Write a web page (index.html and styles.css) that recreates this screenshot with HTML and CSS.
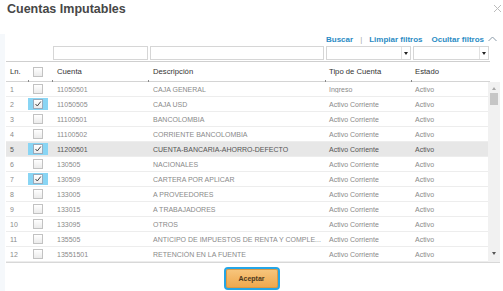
FILE: index.html
```html
<!DOCTYPE html>
<html lang="es">
<head>
  <meta charset="UTF-8">
  <title>Cuentas Imputables</title>
  <link rel="stylesheet" href="styles.css">
</head>
<body>
  <div class="dialogo">
    <div class="titulo">
      <h2>Cuentas Imputables</h2>
      <svg class="cerrar" width="9" height="9" viewBox="0 0 9 9"><path d="M1 1 L8 8 M8 1 L1 8" stroke="#bcbcbc" stroke-width="1" fill="none"/></svg>
    </div>

    <div class="contenido">
      <div class="enlaces">
        <a>Buscar</a>
        <span class="sep">|</span>
        <a>Limpiar filtros</a>
        <a class="ocultar">Ocultar filtros</a>
        <svg class="caret" width="9" height="6" viewBox="0 0 9 6"><path d="M0.5 5 L4.5 1 L8.5 5" stroke="#8a9aa8" stroke-width="1" fill="none"/></svg>
      </div>

      <div class="filtros">
        <div class="campo w-cta"></div>
        <div class="campo w-desc"></div>
        <div class="campo sel w-tipo"><span class="flecha"></span></div>
        <div class="campo sel w-est"><span class="flecha"></span></div>
      </div>

      <div class="cabecera">
        <div class="c">Ln.</div>
        <div class="c chk tick"><span class="cb"></span></div>
        <div class="c cta tick">Cuenta</div>
        <div class="c desc tick">Descripción</div>
        <div class="c tick">Tipo de Cuenta</div>
        <div class="c tick">Estado</div>
      </div>

      <div class="cuerpo">
        <div class="filas">
          <div class="fila"><div class="c">1</div><div class="c chk"><span class="marca"><span class="cb"></span></span></div><div class="c cta">11050501</div><div class="c desc">CAJA GENERAL</div><div class="c">Ingreso</div><div class="c">Activo</div></div>
          <div class="fila"><div class="c">2</div><div class="c chk"><span class="marca on"><span class="cb"><svg width="8" height="8" viewBox="0 0 8 8"><path d="M1.5 4 L3.3 6 L6.8 1.5" stroke="#444" stroke-width="1" fill="none"/></svg></span></span></div><div class="c cta">11050505</div><div class="c desc">CAJA USD</div><div class="c">Activo Corriente</div><div class="c">Activo</div></div>
          <div class="fila"><div class="c">3</div><div class="c chk"><span class="marca"><span class="cb"></span></span></div><div class="c cta">11100501</div><div class="c desc">BANCOLOMBIA</div><div class="c">Activo Corriente</div><div class="c">Activo</div></div>
          <div class="fila"><div class="c">4</div><div class="c chk"><span class="marca"><span class="cb"></span></span></div><div class="c cta">11100502</div><div class="c desc">CORRIENTE BANCOLOMBIA</div><div class="c">Activo Corriente</div><div class="c">Activo</div></div>
          <div class="fila activa"><div class="c">5</div><div class="c chk"><span class="marca on"><span class="cb"><svg width="8" height="8" viewBox="0 0 8 8"><path d="M1.5 4 L3.3 6 L6.8 1.5" stroke="#444" stroke-width="1" fill="none"/></svg></span></span></div><div class="c cta">11200501</div><div class="c desc">CUENTA-BANCARIA-AHORRO-DEFECTO</div><div class="c">Activo Corriente</div><div class="c">Activo</div></div>
          <div class="fila"><div class="c">6</div><div class="c chk"><span class="marca"><span class="cb"></span></span></div><div class="c cta">130505</div><div class="c desc">NACIONALES</div><div class="c">Activo Corriente</div><div class="c">Activo</div></div>
          <div class="fila"><div class="c">7</div><div class="c chk"><span class="marca on"><span class="cb"><svg width="8" height="8" viewBox="0 0 8 8"><path d="M1.5 4 L3.3 6 L6.8 1.5" stroke="#444" stroke-width="1" fill="none"/></svg></span></span></div><div class="c cta">130509</div><div class="c desc">CARTERA POR APLICAR</div><div class="c">Activo Corriente</div><div class="c">Activo</div></div>
          <div class="fila"><div class="c">8</div><div class="c chk"><span class="marca"><span class="cb"></span></span></div><div class="c cta">133005</div><div class="c desc">A PROVEEDORES</div><div class="c">Activo Corriente</div><div class="c">Activo</div></div>
          <div class="fila"><div class="c">9</div><div class="c chk"><span class="marca"><span class="cb"></span></span></div><div class="c cta">133015</div><div class="c desc">A TRABAJADORES</div><div class="c">Activo Corriente</div><div class="c">Activo</div></div>
          <div class="fila"><div class="c">10</div><div class="c chk"><span class="marca"><span class="cb"></span></span></div><div class="c cta">133095</div><div class="c desc">OTROS</div><div class="c">Activo Corriente</div><div class="c">Activo</div></div>
          <div class="fila"><div class="c">11</div><div class="c chk"><span class="marca"><span class="cb"></span></span></div><div class="c cta">135505</div><div class="c desc">ANTICIPO DE IMPUESTOS DE RENTA Y COMPLE...</div><div class="c">Activo Corriente</div><div class="c">Activo</div></div>
          <div class="fila"><div class="c">12</div><div class="c chk"><span class="marca"><span class="cb"></span></span></div><div class="c cta">13551501</div><div class="c desc">RETENCIÓN EN LA FUENTE</div><div class="c">Activo Corriente</div><div class="c">Activo</div></div>
        </div>
        <div class="scroll">
          <span class="arr arriba"></span>
          <span class="pulgar"></span>
          <span class="arr abajo"></span>
        </div>
      </div>

      <div class="pie">
        <button class="aceptar">Aceptar</button>
      </div>
    </div>
  </div>
</body>
</html>
```

FILE: styles.css
```css
body {
  margin: 0;
  background: white;
  font-family: 'Liberation Sans', Arial, sans-serif;
}
.dialogo {
  width: 503px;
  height: 291px;
  overflow: hidden;
}
.titulo {
  height: 18px;
  display: flex;
  justify-content: space-between;
  align-items: flex-start;
}
.titulo h2 {
  margin: 0;
  padding: 1px 0 0 7px;
  font-size: 12.5px;
  line-height: 16px;
  color: #474747;
}
.cerrar {
  margin: 4px 1px 0 0;
}
.contenido {
  border-left: 5px solid #f5f8fb;
  padding-left: 1px;
  height: 273px;
}
.enlaces {
  margin-top: 16px;
  height: 10px;
  display: flex;
  justify-content: flex-end;
  align-items: center;
  padding-right: 6px;
  font-size: 8px;
  font-weight: bold;
}
.enlaces a {
  color: #2b8bc4;
}
.enlaces .sep {
  color: #aaa;
  font-weight: normal;
  margin: 0 7px;
}
.enlaces .ocultar {
  margin-left: 9px;
}
.caret {
  margin-left: 4px;
}
.filtros {
  margin-top: 2px;
  height: 14px;
  display: flex;
  padding-left: 47px;
}
.campo {
  height: 12px;
  border: 1px solid #d6d6d6;
  background: white;
  margin-left: 2px;
  position: relative;
}
.w-cta { width: 93px; margin-left: 0; }
.w-desc { width: 172px; }
.w-tipo { width: 83px; }
.w-est { width: 74px; }
.sel .flecha {
  position: absolute;
  right: 0;
  top: 0;
  width: 8px;
  height: 12px;
  border-left: 1px solid #e2e2e2;
}
.sel .flecha::after {
  content: '';
  position: absolute;
  left: 2px;
  top: 5px;
  border-left: 2.5px solid transparent;
  border-right: 2.5px solid transparent;
  border-top: 3px solid #222;
}
.cabecera, .fila {
  display: grid;
  grid-template-columns: 22px 24px 96px 177px 86px 77px;
  align-items: center;
}
.cabecera {
  margin-top: 1px;
  width: 484px;
  height: 19px;
  border-top: 1px solid #cfcfcf;
  border-bottom: 1px solid #d4d4d4;
  font-size: 7.7px;
  color: #333;
}
.c {
  padding-left: 4px;
  white-space: nowrap;
  overflow: hidden;
}
.c.cta, .c.desc {
  padding-left: 5px;
}
.c.chk {
  padding: 0;
  display: flex;
  justify-content: center;
}
.cabecera .c {
  height: 19px;
  line-height: 19px;
  position: relative;
  overflow: visible;
}
.cabecera .tick::before {
  content: '';
  position: absolute;
  left: 0;
  bottom: -1px;
  width: 1px;
  height: 2px;
  background: #888;
}
.cabecera .chk {
  align-items: center;
}
.cb {
  width: 8px;
  height: 8px;
  border: 1px solid #c2c2c2;
  background: linear-gradient(#ffffff, #ebebeb);
  display: flex;
  align-items: center;
  justify-content: center;
}
.cb svg {
  display: block;
}
.marca {
  width: 20px;
  height: 12px;
  display: flex;
  align-items: center;
  justify-content: center;
  margin-left: -4px;
}
.marca.on {
  background: #89d5f4;
}
.marca.on .cb {
  border-color: #9ab;
}
.cabecera .cb {
  margin-left: -4px;
}
.cuerpo {
  display: flex;
  border-bottom: 1px solid #d8d8d8;
  width: 494px;
}
.filas {
  width: 482px;
}
.fila {
  height: 14px;
  border-bottom: 1px solid #ededed;
  font-size: 7px;
}
.fila .c {
  color: #8a8a8a;
}
.fila.activa {
  background: #e7e7e7;
}
.fila.activa .c {
  color: #555;
}
.scroll {
  width: 12px;
  background: #f1f1f1;
  display: flex;
  flex-direction: column;
  align-items: center;
}
.arr {
  width: 0;
  height: 0;
  border-left: 2.5px solid transparent;
  border-right: 2.5px solid transparent;
}
.arriba {
  margin-top: 5px;
  border-bottom: 3px solid #a8a8a8;
}
.pulgar {
  margin-top: 3px;
  width: 8px;
  height: 12px;
  background: #c6c6c6;
}
.abajo {
  margin-top: auto;
  margin-bottom: 7px;
  border-top: 3px solid #555;
}
.pie {
  display: flex;
  justify-content: center;
  padding-top: 4px;
  padding-right: 6px;
}
.aceptar {
  width: 56px;
  height: 23px;
  border: 2px solid #25a6e6;
  border-radius: 4px;
  box-shadow: inset 0 0 0 1px #dc9a45;
  background: linear-gradient(#f7c67e, #eea74c);
  font-family: 'Liberation Sans', Arial, sans-serif;
  font-size: 7px;
  font-weight: bold;
  color: #4d3a1e;
  padding: 0;
  cursor: pointer;
}
```
